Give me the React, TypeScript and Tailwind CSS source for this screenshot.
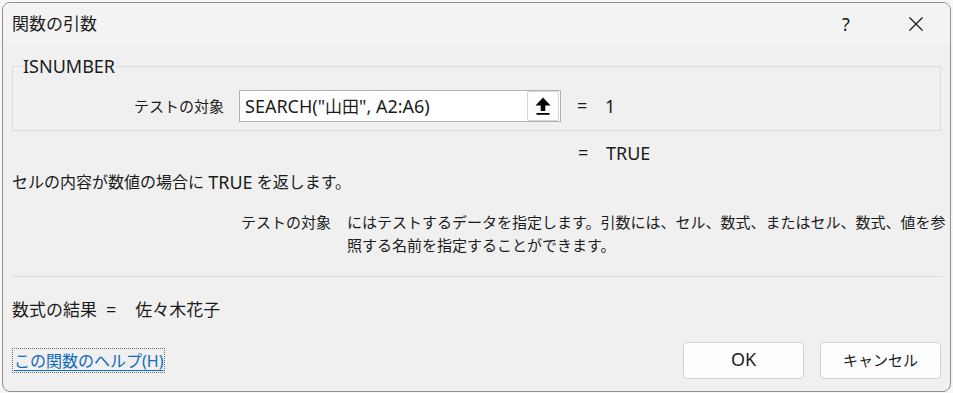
const font = "font-['Noto_Sans','Noto_Sans_CJK_JP',sans-serif]";

// Latin runs render larger than the kana in the original UI font
const L = ({ children }: { children: React.ReactNode }) => (
    <span className="text-[18px] leading-none">{children}</span>
)

const CollapseIcon = () => (
    <svg width="18" height="20" viewBox="0 0 18 20">
        <polygon points="9,1.5 16.5,9.5 11.3,9.5 11.3,15 6.7,15 6.7,9.5 1.5,9.5" fill="#000" />
        <rect x="2.5" y="17" width="13" height="1.8" fill="#000" />
    </svg>
)

const App = () => {
    return (
        <div className={`w-[953px] h-[393px] bg-[#f7f7f7] pl-[2px] pt-[2px] ${font} text-[#1b1b1b]`}>
            <div className="w-[949px] h-[390px] rounded-[8px] border border-[#8e8e8e] overflow-hidden bg-[#f0f0f0] flex flex-col">
                {/* title bar */}
                <div className="h-[41px] bg-[#f3f3f3] flex items-center">
                    <div className="pl-[9px] text-[17px] leading-none">関数の引数</div>
                    <div className="ml-auto w-[68px] flex justify-center text-[18px] leading-none pr-[4px]">?</div>
                    <div className="w-[68px] flex justify-center">
                        <svg width="16" height="16" viewBox="0 0 16 16">
                            <path d="M1.5 1.5 L14.5 14.5 M14.5 1.5 L1.5 14.5" stroke="#1b1b1b" strokeWidth="1.3" fill="none" />
                        </svg>
                    </div>
                </div>

                <div className="flex flex-col px-[9px] text-[15px]">
                    {/* group box */}
                    <div className="mt-[22px] h-[65px] border border-[#dcdcdc] flex flex-col">
                        <div className="-mt-[11px] ml-[9px] w-fit px-[1px] bg-[#f0f0f0] h-[20px] flex items-center"><L>ISNUMBER</L></div>
                        <div className="mt-[14px] h-[32px] flex items-center">
                            <div className="w-[211px] text-right">テストの対象</div>
                            <div className="ml-[15px] w-[322px] h-[32px] border border-[#b0b0b0] bg-white flex items-center pl-[5px] pr-[1px]">
                                <span className="leading-none whitespace-nowrap">
                                    <L>SEARCH("</L><span className="text-[17px]">山田</span><L>", A2:A6)</L>
                                </span>
                                <div className="ml-auto w-[32px] h-[30px] border border-[#d6d6d6] rounded-[2px] bg-[#fdfdfd] flex items-center justify-center">
                                    <CollapseIcon />
                                </div>
                            </div>
                            <div className="ml-[16px] w-[28px]"><L>=</L></div>
                            <L>1</L>
                        </div>
                    </div>

                    {/* result row */}
                    <div className="mt-[11px] h-[22px] flex items-center">
                        <div className="ml-[566px] w-[28px]"><L>=</L></div>
                        <L>TRUE</L>
                    </div>

                    <div className="mt-[7px] h-[22px] flex items-center text-[16px] whitespace-pre">
                        セルの内容が数値の場合に <L>TRUE</L> を返します。
                    </div>

                    {/* argument description */}
                    <div className="mt-[18px] flex leading-[23px]">
                        <div className="w-[319px] text-right shrink-0">テストの対象</div>
                        <div className="ml-[16px] whitespace-nowrap">
                            にはテストするデータを指定します。引数には、セル、数式、またはセル、数式、値を参<br />
                            照する名前を指定することができます。
                        </div>
                    </div>

                    <div className="mt-[19px] h-px bg-[#dedede] mr-[-2px]" />

                    <div className="mt-[22px] h-[22px] flex items-center text-[17px]">
                        <span>数式の結果</span>
                        <span className="ml-[9px]"><L>=</L></span>
                        <span className="ml-[19px]">佐々木花子</span>
                    </div>

                    {/* footer */}
                    <div className="mt-[21px] flex items-center">
                        <div className="border border-dotted border-[#6b6b6b] px-[1px] h-[25px] flex items-center">
                            <span className="text-[#0f6cbd] text-[16px] underline underline-offset-[3px] leading-none">この関数のヘルプ(H)</span>
                        </div>
                        <button className="ml-auto w-[121px] h-[37px] bg-[#fdfdfd] border border-[#d3d3d3] rounded-[4px]"><L>OK</L></button>
                        <button className="ml-[16px] w-[121px] h-[37px] bg-[#fdfdfd] border border-[#d3d3d3] rounded-[4px] text-[15px]">キャンセル</button>
                    </div>
                </div>
            </div>
        </div>
    )
}

export default App
